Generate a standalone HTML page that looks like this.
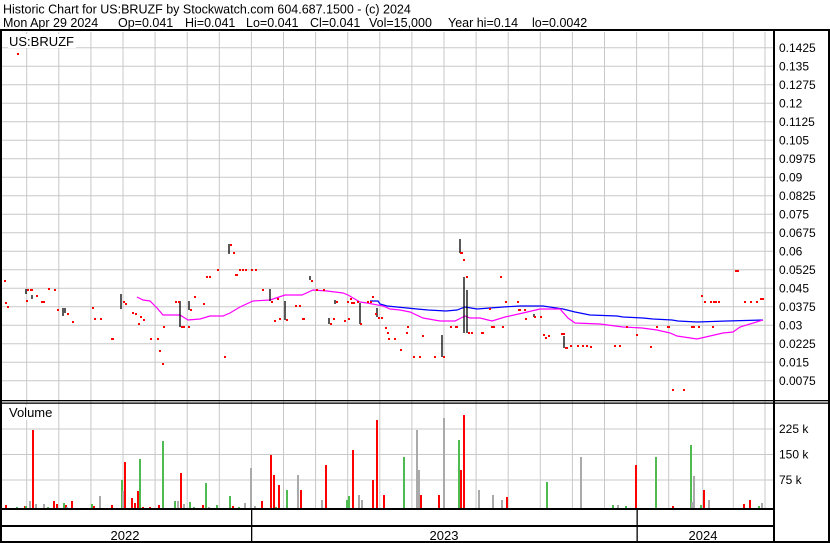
<!DOCTYPE html>
<html><head><meta charset="utf-8"><style>
html,body{margin:0;padding:0;background:#fff;}
body{width:830px;height:543px;overflow:hidden;position:relative;font-family:"Liberation Sans",Arial,sans-serif;}
svg{position:absolute;left:0;top:0;}
</style></head><body>
<svg width="830" height="543" viewBox="0 0 830 543" xmlns="http://www.w3.org/2000/svg" font-family="Liberation Sans, Arial, sans-serif">
<rect width="830" height="543" fill="#fff"/>
<text x="3" y="13.5" font-size="12.5" fill="#000">Historic Chart for US:BRUZF by Stockwatch.com 604.687.1500 - (c) 2024</text>
<g font-size="12.5" fill="#000">
<text x="3" y="27">Mon Apr 29 2024</text>
<text x="118" y="27">Op=0.041</text>
<text x="185" y="27">Hi=0.041</text>
<text x="246" y="27">Lo=0.041</text>
<text x="310" y="27">Cl=0.041</text>
<text x="369" y="27">Vol=15,000</text>
<text x="448" y="27">Year hi=0.14</text>
<text x="532" y="27">lo=0.0042</text>
</g>
<g stroke="#c8c8c8" stroke-width="1">
<path d="M2 47.7H773M2 66.2H773M2 84.7H773M2 103.2H773M2 121.7H773M2 140.2H773M2 158.7H773M2 177.2H773M2 195.7H773M2 214.2H773M2 232.7H773M2 251.2H773M2 269.7H773M2 288.2H773M2 306.7H773M2 325.2H773M2 343.7H773M2 362.2H773M2 380.7H773"/>
<path d="M2 429H773M2 454.5H773M2 480H773"/>
<path d="M26.7 32V509M58.8 32V509M90.9 32V509M123 32V509M155.1 32V509M187.2 32V509M219.3 32V509M251.4 32V509M283.5 32V509M315.6 32V509M347.7 32V509M379.8 32V509M411.9 32V509M444 32V509M476.1 32V509M508.2 32V509M540.3 32V509M572.4 32V509M604.5 32V509M636.6 32V509M668.7 32V509M702.7 32V509M733.3 32V509M765 32V509"/>
</g>
<rect x="8" y="34" width="68" height="14" fill="#fff"/>
<text x="9" y="46" font-size="13">US:BRUZF</text>
<rect x="8" y="405" width="50" height="15" fill="#fff"/>
<text x="9" y="417" font-size="13">Volume</text>
<g font-size="12" fill="#000">
<text x="779" y="52">0.1425</text><text x="779" y="70.5">0.135</text><text x="779" y="89">0.1275</text><text x="779" y="107.5">0.12</text><text x="779" y="126">0.1125</text><text x="779" y="144.5">0.105</text><text x="779" y="163">0.0975</text><text x="779" y="181.5">0.09</text><text x="779" y="200">0.0825</text><text x="779" y="218.5">0.075</text><text x="779" y="237">0.0675</text><text x="779" y="255.5">0.06</text><text x="779" y="274">0.0525</text><text x="779" y="292.5">0.045</text><text x="779" y="311">0.0375</text><text x="779" y="329.5">0.03</text><text x="779" y="348">0.0225</text><text x="779" y="366.5">0.015</text><text x="779" y="385">0.0075</text>
<text x="779" y="433">225 k</text><text x="779" y="458.5">150 k</text><text x="779" y="484">75 k</text>
</g>
<g font-size="13" text-anchor="middle"><text x="125" y="540">2022</text><text x="444" y="540">2023</text><text x="703" y="540">2024</text></g>
<polyline fill="none" stroke="#0000ff" stroke-width="1.2" points="370,301 378,301 380,304 387,306 397,307 407,308 417,309 428,310 446,311 457,310 465,307 477,309 503,307 520,306 543,306 563,309 575,312 590,315 617,316 623,317 643,318 653,319 672,320 678,321 697,322 727,321 763,320"/>
<polyline fill="none" stroke="#ff00ff" stroke-width="1.2" points="137,297 143,300 150,301 157,308 163,315 180,315 188,320 200,319 210,316 223,316 230,313 240,307 253,301 270,300 285,295 302,295 313,290 327,291 343,293 348,295 360,302 367,303 383,306 390,309 400,310 410,312 423,318 440,321 455,321 465,316 470,318 480,318 492,321 505,317 523,313 540,309 560,309 568,318 575,323 600,324 623,327 642,328 657,330 670,333 677,336 697,339 710,336 723,333 733,332 740,327 763,320"/>
<g stroke="#000" stroke-width="1.3">
<path d="M26 289V294M32 295V299M63 308V316M65 308V313M121 294V309M180 301V327M189 301V310M229 244V254M270 289V301M285 301V320M310 276V280M329 318V324M335 300V304M360 303V324M377 308V317M460 239V253M464 277V333M467 290V333M442 335V357M534 314V317M564 336V348"/>
</g>
<g fill="#ff0000">
<path d="M17 53h2v2h-2zM4 280h2v2h-2zM5 302h2v2h-2zM7 306h2v2h-2zM26 300h2v2h-2zM27 289h2v2h-2zM30 289h3v2h-3zM36 295h2v2h-2zM41 301h4v2h-4zM48 288h2v2h-2zM54 289h2v2h-2zM57 309h2v2h-2zM67 313h2v2h-2zM72 321h2v2h-2zM92 307h2v2h-2zM94 318h2v2h-2zM100 318h2v2h-2zM111 338h3v2h-3zM123 301h2v2h-2zM125 303h2v2h-2zM132 312h2v2h-2zM135 313h2v2h-2zM138 323h2v2h-2zM140 316h2v2h-2zM143 319h2v2h-2zM150 338h2v2h-2zM157 338h2v2h-2zM159 350h2v2h-2zM162 363h2v2h-2zM163 326h2v2h-2zM175 301h2v2h-2zM178 301h2v2h-2zM181 326h4v2h-4zM188 326h2v2h-2zM190 309h2v2h-2zM194 296h2v2h-2zM203 303h2v2h-2zM206 276h2v2h-2zM209 276h2v2h-2zM217 269h2v2h-2zM224 356h2v2h-2zM230 244h2v2h-2zM233 252h2v2h-2zM235 274h3v2h-3zM239 269h2v2h-2zM242 269h2v2h-2zM245 269h2v2h-2zM251 269h2v2h-2zM255 269h2v2h-2zM262 289h2v2h-2zM271 301h2v2h-2zM274 320h2v2h-2zM277 298h2v2h-2zM279 318h2v2h-2zM286 319h2v2h-2zM295 305h2v2h-2zM299 305h2v2h-2zM302 318h3v2h-3zM311 280h2v2h-2zM316 289h2v2h-2zM323 289h2v2h-2zM330 323h2v2h-2zM333 318h2v2h-2zM336 301h2v2h-2zM344 320h2v2h-2zM348 318h2v2h-2zM347 301h2v2h-2zM350 298h2v2h-2zM351 302h2v2h-2zM353 302h2v2h-2zM357 301h2v2h-2zM360 323h2v2h-2zM367 301h2v2h-2zM370 301h2v2h-2zM372 296h2v2h-2zM375 313h2v2h-2zM378 317h2v2h-2zM381 317h2v2h-2zM385 327h2v2h-2zM387 332h2v2h-2zM388 338h2v2h-2zM394 338h2v2h-2zM400 349h2v2h-2zM406 332h2v2h-2zM407 326h2v2h-2zM413 356h2v2h-2zM419 356h2v2h-2zM422 335h2v2h-2zM434 356h2v2h-2zM443 356h2v2h-2zM450 326h2v2h-2zM455 326h3v2h-3zM460 252h3v2h-3zM463 259h2v2h-2zM466 276h2v2h-2zM468 332h2v2h-2zM471 332h2v2h-2zM481 332h3v2h-3zM489 308h2v2h-2zM491 326h4v2h-4zM500 276h2v2h-2zM502 326h2v2h-2zM505 301h2v2h-2zM517 301h2v2h-2zM518 309h3v2h-3zM524 309h2v2h-2zM525 318h2v2h-2zM534 316h2v2h-2zM540 316h2v2h-2zM543 334h2v2h-2zM545 337h2v2h-2zM548 335h2v2h-2zM561 333h4v2h-4zM565 347h3v2h-3zM570 345h2v2h-2zM577 345h2v2h-2zM582 345h2v2h-2zM586 345h2v2h-2zM590 346h2v2h-2zM614 345h2v2h-2zM619 345h2v2h-2zM626 326h2v2h-2zM636 334h2v2h-2zM650 346h2v2h-2zM656 326h2v2h-2zM667 326h3v2h-3zM672 389h2v2h-2zM683 389h2v2h-2zM691 326h4v2h-4zM698 326h2v2h-2zM701 295h2v2h-2zM704 301h2v2h-2zM710 301h2v2h-2zM713 301h2v2h-2zM715 301h2v2h-2zM718 301h2v2h-2zM712 326h2v2h-2zM735 270h4v2h-4zM744 301h2v2h-2zM750 301h2v2h-2zM756 301h2v2h-2zM760 298h4v2h-4z"/>
</g>
<g>
<path fill="#ff0000" d="M5 505h2v4h-2zM32 430h2v79h-2zM24 506h2v3h-2zM53 501h2v8h-2zM56 504h2v5h-2zM65 505h2v4h-2zM71 501h2v8h-2zM93 506h2v3h-2zM111 505h2v4h-2zM124 462h2v47h-2zM131 498h2v11h-2zM134 503h2v6h-2zM137 491h2v18h-2zM142 507h2v2h-2zM149 507h2v2h-2zM158 505h2v4h-2zM180 473h2v36h-2zM202 505h2v4h-2zM232 506h2v3h-2zM261 501h2v8h-2zM270 455h2v54h-2zM273 475h2v34h-2zM278 485h2v24h-2zM300 490h2v19h-2zM325 465h2v44h-2zM352 450h2v59h-2zM372 480h2v29h-2zM376 420h2v89h-2zM383 495h2v14h-2zM420 495h2v14h-2zM438 495h2v14h-2zM460 470h2v39h-2zM463 415h2v94h-2zM506 497h2v12h-2zM635 465h2v44h-2zM672 506h2v3h-2zM703 490h2v19h-2zM743 504h2v5h-2zM749 500h2v9h-2z"/>
<path fill="#50bb50" d="M16 507h2v2h-2zM25 506h2v3h-2zM47 507h2v2h-2zM63 503h2v6h-2zM91 504h2v5h-2zM121 480h2v29h-2zM139 459h2v50h-2zM162 441h2v68h-2zM174 501h2v8h-2zM189 502h2v7h-2zM193 507h2v2h-2zM205 483h2v26h-2zM216 505h2v4h-2zM229 496h2v13h-2zM238 507h2v2h-2zM275 507h2v2h-2zM286 490h2v19h-2zM346 500h2v9h-2zM348 496h2v13h-2zM403 457h2v52h-2zM458 440h2v69h-2zM546 482h2v27h-2zM612 505h2v4h-2zM625 506h2v3h-2zM655 457h2v52h-2zM690 445h2v64h-2zM700 505h2v4h-2zM758 506h2v3h-2z"/>
<path fill="#aaaaaa" d="M29 501h2v8h-2zM35 504h2v5h-2zM43 504h2v5h-2zM66 507h2v2h-2zM99 496h2v13h-2zM122 491h2v18h-2zM177 501h2v8h-2zM183 504h2v5h-2zM208 507h2v2h-2zM244 503h2v6h-2zM250 468h2v41h-2zM254 506h2v3h-2zM297 475h2v34h-2zM321 500h2v9h-2zM358 495h2v14h-2zM361 500h2v9h-2zM416 430h2v79h-2zM418 470h2v39h-2zM443 418h2v91h-2zM478 490h2v19h-2zM492 495h2v14h-2zM501 500h2v9h-2zM580 457h2v52h-2zM617 505h2v4h-2zM691 502h2v7h-2zM693 476h2v33h-2zM708 500h2v9h-2zM761 503h2v6h-2z"/>
</g>
<g fill="#000">
<rect x="0" y="29" width="830" height="2"/>
<rect x="0" y="29" width="2" height="514"/>
<rect x="773" y="29" width="2" height="514"/>
<rect x="828" y="29" width="2" height="514"/>
<rect x="0" y="400" width="830" height="1.3"/>
<rect x="0" y="402.5" width="830" height="1.3"/>
<rect x="0" y="508" width="775" height="2"/>
<rect x="0" y="525" width="775" height="2"/>
<rect x="0" y="541" width="830" height="2"/>
<rect x="251" y="509" width="1.3" height="33"/>
<rect x="636.5" y="509" width="1.3" height="33"/>
</g>
</svg>
</body></html>
